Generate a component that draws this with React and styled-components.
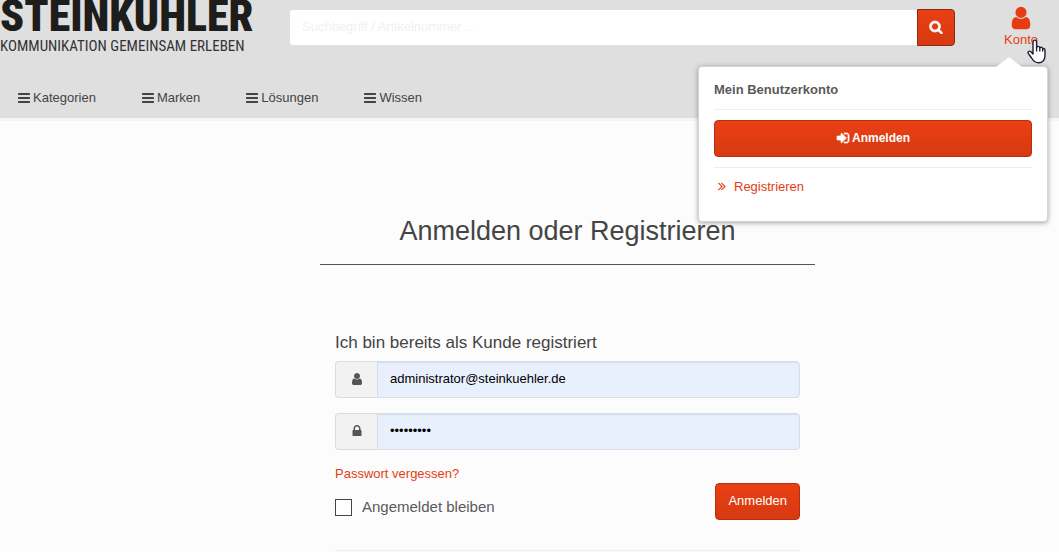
import React, { useState } from "react";
import styled, { createGlobalStyle, css } from "styled-components";

const GlobalStyle = createGlobalStyle`
  *, *::before, *::after { box-sizing: border-box; }
  body {
    margin: 0;
    background: #fcfcfc;
    color: #444;
    font: 13px/20px "Liberation Sans", Arial, sans-serif;
    overflow-x: hidden;
  }
  input, button { font: inherit; }
  a { color: #e63c12; text-decoration: none; }
`;

const iconPaths = {
  user: "M1536 1399q0 109-62.5 187t-150.5 78h-854q-88 0-150.5-78t-62.5-187q0-85 8.5-160.5t31.5-152 58.5-131 94-89 134.5-34.5q131 128 313 128t313-128q76 0 134.5 34.5t94 89 58.5 131 31.5 152 8.5 160.5zm-256-887q0 159-112.5 271.5t-271.5 112.5-271.5-112.5-112.5-271.5 112.5-271.5 271.5-112.5 271.5 112.5 112.5 271.5z",
  lock: "M640 768h512v-192q0-106-75-181t-181-75-181 75-75 181v192zm832 96v576q0 40-28 68t-68 28h-960q-40 0-68-28t-28-68v-576q0-40 28-68t68-28h32v-192q0-184 132-316t316-132 316 132 132 316v192h32q40 0 68 28t28 68z",
  search: "M1216 832q0-185-131.5-316.5t-316.5-131.5-316.5 131.5-131.5 316.5 131.5 316.5 316.5 131.5 316.5-131.5 131.5-316.5zm512 832q0 52-38 90t-90 38q-54 0-90-38l-343-342q-179 124-399 124-143 0-273.5-55.5t-225-150-150-225-55.5-273.5 55.5-273.5 150-225 225-150 273.5-55.5 273.5 55.5 225 150 150 225 55.5 273.5q0 220-124 399l343 343q37 37 37 90z",
  bars: "M1664 1344v128q0 26-19 45t-45 19h-1408q-26 0-45-19t-19-45v-128q0-26 19-45t45-19h1408q26 0 45 19t19 45zm0-512v128q0 26-19 45t-45 19h-1408q-26 0-45-19t-19-45v-128q0-26 19-45t45-19h1408q26 0 45 19t19 45zm0-512v128q0 26-19 45t-45 19h-1408q-26 0-45-19t-19-45v-128q0-26 19-45t45-19h1408q26 0 45 19t19 45z",
  signIn: "M1312 896q0 26-19 45l-544 544q-19 19-45 19t-45-19-19-45v-288h-448q-26 0-45-19t-19-45v-384q0-26 19-45t45-19h448v-288q0-26 19-45t45-19 45 19l544 544q19 19 19 45zm352-352v704q0 119-84.5 203.5t-203.5 84.5h-320q-13 0-22.5-9.5t-9.5-22.5q0-4-1-20t-.5-26.5 3-23.5 10-19.5 20.5-6.5h320q66 0 113-47t47-113v-704q0-66-47-113t-113-47h-312l-11.5-1-11.5-3-8-5.5-7-9-2-13.5q0-4-1-20t-.5-26.5 3-23.5 10-19.5 20.5-6.5h320q119 0 203.5 84.5t84.5 203.5z",
  angles: "M979 960q0 13-10 23l-466 466q-10 10-23 10t-23-10l-50-50q-10-10-10-23t10-23l393-393-393-393q-10-10-10-23t10-23l50-50q10-10 23-10t23 10l466 466q10 10 10 23zm384 0q0 13-10 23l-466 466q-10 10-23 10t-23-10l-50-50q-10-10-10-23t10-23l393-393-393-393q-10-10-10-23t10-23l50-50q10-10 23-10t23 10l466 466q10 10 10 23z",
};

const Svg = styled.svg`
  display: block;
  flex: none;
  fill: currentColor;
  ${(p) => p.$bold && css`stroke: currentColor; stroke-width: 90;`}
`;

function Icon({ name, size = 14, bold }) {
  return (
    <Svg
      width={size}
      height={size}
      viewBox="0 0 1792 1792"
      $bold={bold}
      aria-hidden="true"
    >
      <path d={iconPaths[name]} />
    </Svg>
  );
}

const Header = styled.header`
  background: #dfdfdf;
  border-bottom: 3px solid #f5f5f5;
`;

const TopRow = styled.div`
  display: flex;
  align-items: flex-start;
  padding-right: 21px;
`;

const Logo = styled.a`
  display: flex;
  flex-direction: column;
  flex: none;
  width: 252px;
  white-space: nowrap;
  color: #1d1d1b;
  font-family: "Roboto Condensed", Roboto, sans-serif;
`;

const LogoName = styled.span`
  font-size: 44px;
  line-height: 33px;
  font-weight: 900;
`;

const LogoClaim = styled.span`
  font-size: 15px;
  line-height: 27px;
  color: #333;
`;

const Search = styled.form`
  display: flex;
  flex: 1;
  min-width: 0;
  margin: 9px 49px 0 37px;
`;

const SearchInput = styled.input`
  flex: 1;
  min-width: 0;
  height: 37px;
  padding: 0 12px 2px;
  border: 1px solid #dfdfdf;
  border-right: 0;
  border-radius: 4px 0 0 4px;
  background: #fff;
  color: #444;
  outline: 0;
  &::placeholder { color: #f1f1f1; opacity: 1; }
`;

const Button = styled.button`
  display: flex;
  align-items: center;
  justify-content: center;
  gap: 2px;
  height: 37px;
  padding: 0 12px 2px;
  border: 1px solid #b62f0e;
  border-radius: 4px;
  background: linear-gradient(#ea3f14, #d63a11);
  color: #fff;
  cursor: pointer;
  ${(p) => p.$block && css`width: 100%; font-weight: 700; font-size: 12px;`}
  ${(p) => p.$attached && css`
    width: 38px;
    border-color: #8d2811;
    border-radius: 0 4px 4px 0;
  `}
`;

const Account = styled.div`
  position: relative;
  flex: none;
`;

const AccountToggle = styled.a`
  display: flex;
  flex-direction: column;
  align-items: center;
  padding-top: 5px;
  line-height: 18px;
`;

const Popover = styled.div`
  position: absolute;
  z-index: 2;
  top: 66px;
  right: -10px;
  width: 350px;
  padding: 13px 15px 24px;
  border: 1px solid #d4d4d4;
  border-radius: 4px;
  background: #fff;
  box-shadow: 0 1px 5px rgba(0, 0, 0, 0.35);
  &::before {
    content: "";
    position: absolute;
    top: -10px;
    right: 25px;
    border: solid transparent;
    border-width: 0 13px 10px;
    border-bottom-color: #fff;
  }
`;

const PopoverTitle = styled.strong`
  display: block;
  padding-bottom: 9px;
  color: #5a5a5a;
`;

const PopoverAction = styled.div`
  padding: 10px 0;
  border: solid #eee;
  border-width: 1px 0;
`;

const PopoverLink = styled.a`
  display: flex;
  align-items: center;
  gap: 5px;
  margin-top: 9px;
  padding-left: 1px;
  svg { margin-bottom: 2px; }
`;

const Pointer = styled.svg`
  position: absolute;
  z-index: 3;
  top: 39px;
  left: 23px;
  pointer-events: none;
`;

const Nav = styled.nav`
  display: flex;
  gap: 45px;
  padding: 28px 17px 10px;
`;

const NavLink = styled.a`
  display: flex;
  align-items: center;
  gap: 2px;
  color: #444;
`;

const Main = styled.main`
  display: grid;
  grid-template-columns: 320fr minmax(0, 495fr) 244fr;
`;

const Content = styled.div`
  grid-column: 2;
  padding: 90px 0 0;
`;

const Title = styled.h1`
  margin: 0;
  padding-bottom: 13px;
  border-bottom: 1px solid #555;
  color: #444;
  font-size: 27px;
  line-height: 40px;
  font-weight: 400;
  text-align: center;
`;

const LoginForm = styled.form`
  margin: 66px 15px 0;
  border-bottom: 1px solid #eee;
  padding-bottom: 30px;
`;

const FormTitle = styled.h2`
  margin: 0 0 6px;
  font-size: 17px;
  line-height: 24px;
  font-weight: 400;
`;

const Field = styled.div`
  display: flex;
  height: 37px;
  margin-bottom: 15px;
`;

const FieldIcon = styled.label`
  display: flex;
  align-items: center;
  justify-content: center;
  width: 42px;
  padding-bottom: 2px;
  border: 1px solid #dcdcdc;
  border-right: 0;
  border-radius: 4px 0 0 4px;
  background: #f2f2f2;
  color: #555;
`;

const FieldInput = styled.input`
  flex: 1;
  min-width: 0;
  padding: 0 12px 2px;
  border: 1px solid #d8dce4;
  border-radius: 0 4px 4px 0;
  background: #e8effd;
  box-shadow: inset 0 1px 1px rgba(0, 0, 0, 0.08);
  color: #000;
  outline: 0;
`;

const ForgotLink = styled.a`
  display: block;
  line-height: 18px;
`;

const Actions = styled.div`
  display: flex;
  align-items: flex-end;
  justify-content: space-between;
`;

const Remember = styled.label`
  display: flex;
  align-items: center;
  gap: 10px;
  color: #5a5a5a;
  font-size: 15px;
  line-height: 26px;
`;

const Checkbox = styled.input`
  appearance: none;
  width: 17px;
  height: 17px;
  margin: 0;
  border: 1px solid #444;
  background: #fff;
  &:checked { background: #e63c12; }
`;

const navItems = ["Kategorien", "Marken", "Lösungen", "Wissen"];

export default function App() {
  const [email, setEmail] = useState("administrator@steinkuehler.de");
  const [password, setPassword] = useState("passwort1");

  return (
    <>
      <GlobalStyle />
      <Header>
        <TopRow>
          <Logo href="#">
            <LogoName>STEINKUHLER</LogoName>
            <LogoClaim>KOMMUNIKATION GEMEINSAM ERLEBEN</LogoClaim>
          </Logo>
          <Search onSubmit={(e) => e.preventDefault()}>
            <SearchInput
              type="text"
              aria-label="Suche"
              placeholder="Suchbegriff / Artikelnummer ..."
            />
            <Button $attached aria-label="Suchen">
              <Icon name="search" bold />
            </Button>
          </Search>
          <Account>
            <AccountToggle href="#">
              <Icon name="user" size={26} />
              Konto
            </AccountToggle>
            <Popover>
              <PopoverTitle>Mein Benutzerkonto</PopoverTitle>
              <PopoverAction>
                <Button type="button" $block>
                  <Icon name="signIn" bold />
                  Anmelden
                </Button>
              </PopoverAction>
              <PopoverLink href="#">
                <Icon name="angles" />
                Registrieren
              </PopoverLink>
            </Popover>
            <Pointer width="19" height="25" viewBox="0 0 19 25" aria-hidden="true">
              <path
                d="M6 15V3.2C6 .4 9.6.4 9.6 3.2V8.4C10.3 6.8 12.6 7.2 12.8 8.8C13.7 7.7 15.6 8.3 15.7 9.8C16.6 9 18 9.8 18 11.2V16.5C18 20.8 15.6 23.8 11.6 23.8C7.8 23.8 6.2 21.8 4.6 19L1.4 14.6C.3 12.8 2.3 11.4 3.8 12.6Z"
                fill="#fff"
                stroke="#1c1c30"
                strokeWidth="1.4"
                strokeLinejoin="round"
              />
              <path
                d="M9.6 8V12.5M12.8 8.8V12.5M15.7 9.8V12.5"
                fill="none"
                stroke="#1c1c30"
                strokeWidth="1.3"
              />
            </Pointer>
          </Account>
        </TopRow>
        <Nav>
          {navItems.map((item) => (
            <NavLink href="#" key={item}>
              <Icon name="bars" />
              {item}
            </NavLink>
          ))}
        </Nav>
      </Header>
      <Main>
        <Content>
          <Title>Anmelden oder Registrieren</Title>
          <LoginForm onSubmit={(e) => e.preventDefault()}>
            <FormTitle>Ich bin bereits als Kunde registriert</FormTitle>
            <Field>
              <FieldIcon htmlFor="email" aria-label="E-Mail">
                <Icon name="user" />
              </FieldIcon>
              <FieldInput
                id="email"
                type="email"
                value={email}
                onChange={(e) => setEmail(e.target.value)}
              />
            </Field>
            <Field>
              <FieldIcon htmlFor="password" aria-label="Passwort">
                <Icon name="lock" />
              </FieldIcon>
              <FieldInput
                id="password"
                type="password"
                value={password}
                onChange={(e) => setPassword(e.target.value)}
              />
            </Field>
            <ForgotLink href="#">Passwort vergessen?</ForgotLink>
            <Actions>
              <Remember>
                <Checkbox type="checkbox" />
                Angemeldet bleiben
              </Remember>
              <Button type="submit">Anmelden</Button>
            </Actions>
          </LoginForm>
        </Content>
      </Main>
    </>
  );
}
